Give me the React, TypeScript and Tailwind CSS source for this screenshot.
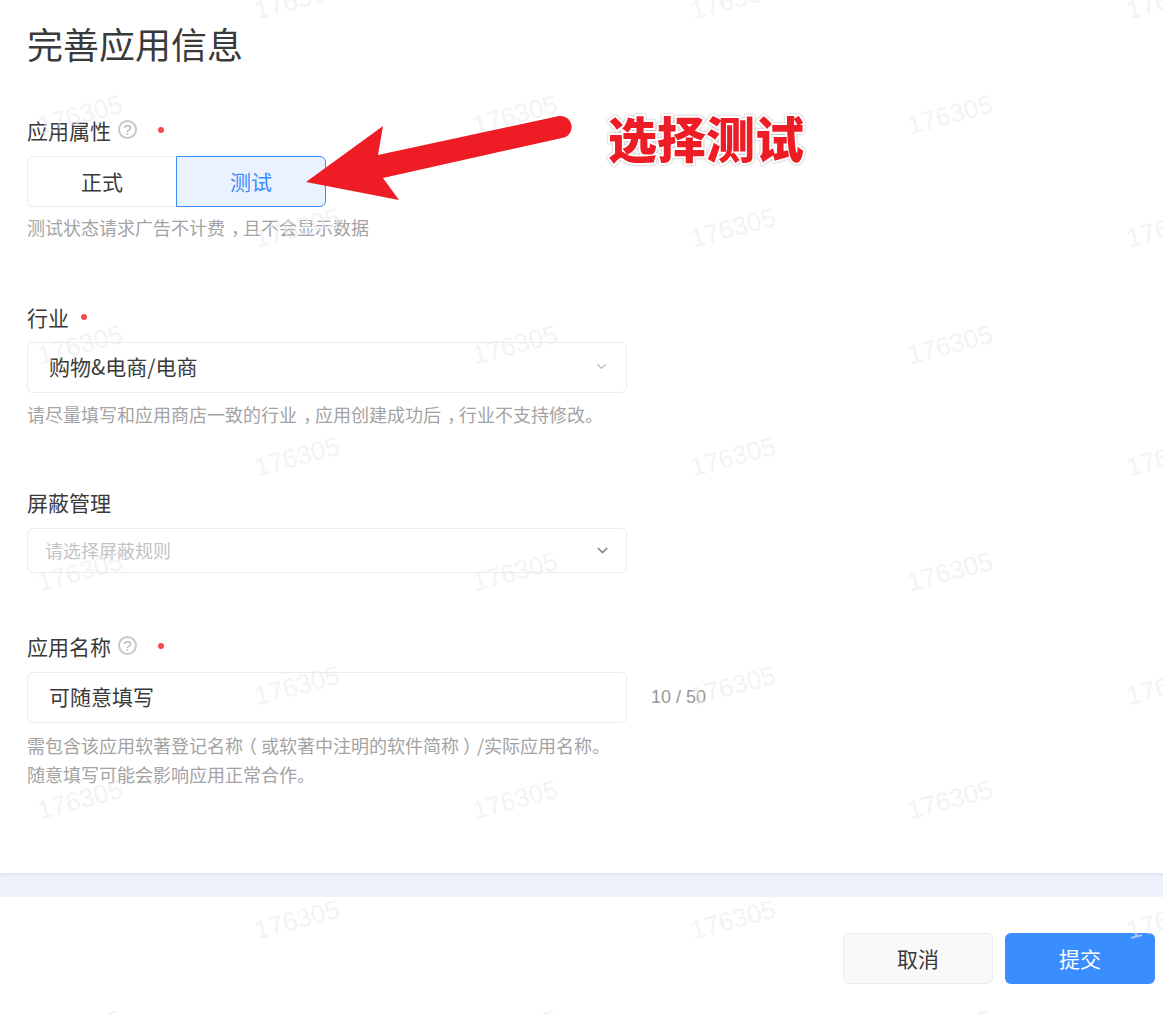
import { ChevronDown } from "lucide-react";

const WATERMARK_ROWS = [0, 115, 228, 345, 457, 572, 686, 800, 920, 1030];

function Watermarks() {
  return (
    <div className="pointer-events-none absolute inset-0 overflow-hidden">
      {WATERMARK_ROWS.map((y, row) =>
        (row % 2 === 0 ? [297, 733, 1169] : [80, 515, 950]).map((x) => (
          <span
            key={`${row}-${x}`}
            className="absolute -translate-x-1/2 -translate-y-1/2 -rotate-[15deg] font-['Liberation_Sans',sans-serif] text-[26px] text-[#e9ecef]/60"
            style={{ left: x, top: y }}
          >
            176305
          </span>
        ))
      )}
    </div>
  );
}

function Help() {
  return (
    <span className="ml-[7px] flex h-[19px] w-[19px] items-center justify-center rounded-full border-2 border-[#c9c9c9] font-['Liberation_Sans',sans-serif] text-[15px] leading-none text-[#b5b5b5]">
      ?
    </span>
  );
}

function Required({ className }: { className: string }) {
  return <span className={`h-[6px] w-[6px] rounded-full bg-[#f7494e] ${className}`} />;
}

function Label(props: { text: string; help?: boolean; required?: boolean }) {
  return (
    <div className="flex h-[30px] items-center pb-[3px] text-[21px] leading-[26px] text-[#3a3a3a]">
      {props.text}
      {props.help && <Help />}
      {props.required && <Required className={props.help ? "ml-[21px]" : "ml-[12px]"} />}
    </div>
  );
}

function Hint({ children }: { children: React.ReactNode }) {
  return <p className="text-[18px] leading-[29px] text-[#a3a3a3]">{children}</p>;
}

export default function App() {
  return (
    <div className="relative h-[1015px] w-full overflow-hidden bg-white font-['Noto_Sans_CJK_SC',sans-serif]">
      <main className="h-[873px] px-[27px] pt-[18px]">
        <h1 className="h-[50px] text-[36px] leading-[50px] font-normal text-[#3a3a3a]">完善应用信息</h1>

        <section className="mt-[48px]">
          <Label text="应用属性" help required />
          <div className="mt-[10px] flex h-[51px] w-[299px] text-[21px]">
            <button className="flex-1 rounded-l-[6px] border border-r-0 border-[#ececec] text-[#3a3a3a]">正式</button>
            <button className="flex-1 rounded-r-[6px] border border-[#3a8dff] bg-[#e9f2fe] text-[#3a8dff]">测试</button>
          </div>
          <div className="mt-[6px]">
            <Hint>
              测试状态请求广告不计费<span className="inline-block translate-x-[6px]">，</span>且不会显示数据
            </Hint>
          </div>
        </section>

        <section className="mt-[61px]">
          <Label text="行业" required />
          <div className="mt-[9px] flex h-[51px] w-[600px] items-center justify-between rounded-[6px] border border-[#ececec] pr-[17px] pb-[2px] pl-[21px] text-[21px] text-[#3a3a3a]">
            购物&amp;电商/电商
            <ChevronDown className="h-[15px] w-[15px] text-[#b5b5b5]" />
          </div>
          <div className="mt-[7px]">
            <Hint>
              请尽量填写和应用商店一致的行业<span className="inline-block translate-x-[6px]">，</span>应用创建成功后
              <span className="inline-block translate-x-[6px]">，</span>行业不支持修改。
            </Hint>
          </div>
        </section>

        <section className="mt-[59px]">
          <Label text="屏蔽管理" />
          <div className="mt-[10px] flex h-[45px] w-[600px] items-center justify-between rounded-[6px] border border-[#ececec] pr-[15px] pl-[17px] text-[18px] text-[#c4c4c4]">
            请选择屏蔽规则
            <ChevronDown className="h-[17px] w-[17px] text-[#888]" />
          </div>
        </section>

        <section className="mt-[59px]">
          <Label text="应用名称" help required />
          <div className="mt-[10px] flex items-center">
            <div className="flex h-[51px] w-[600px] items-center rounded-[6px] border border-[#ececec] pb-[1px] pl-[21px] text-[21px] text-[#3a3a3a]">
              可随意填写
            </div>
            <span className="ml-[24px] font-['Liberation_Sans',sans-serif] text-[18px] text-[#999]">10 / 50</span>
          </div>
          <div className="mt-[8px]">
            <Hint>
              需包含该应用软著登记名称<span className="inline-block -translate-x-[4px]">（</span>或软著中注明的软件简称
              <span className="inline-block translate-x-[4px]">）</span>/实际应用名称。
            </Hint>
            <Hint>随意填写可能会影响应用正常合作。</Hint>
          </div>
        </section>
      </main>

      <div className="h-[24px] bg-[#eff2fb] shadow-[inset_0_3px_3px_-1px_rgba(40,60,120,0.08)]" />

      <footer className="flex justify-end gap-[12px] pt-[36px] pr-[8px] text-[21px]">
        <button className="h-[51px] w-[150px] rounded-[6px] border border-[#ececec] bg-[#f9f9f9] text-[#3a3a3a]">取消</button>
        <button className="h-[51px] w-[150px] rounded-[6px] bg-[#3a8dff] text-white">提交</button>
      </footer>

      <Watermarks />

      {/* annotation drawn on top of the form */}
      <svg className="absolute top-[110px] left-[300px]" width="280" height="100" viewBox="300 110 280 100">
        <path
          d="M306 182 L383 126 L378 155 L559 116 A11 11 0 0 1 562 138 L383 178 L399 200 Z"
          fill="#ee1c25"
        />
      </svg>
      <span className="absolute top-[102px] left-[608px] text-[49px] leading-[70px] font-black whitespace-nowrap text-[#ee1c25] [paint-order:stroke_fill] [-webkit-text-stroke:4px_#fff] [filter:drop-shadow(0_0_1px_#aaa)]">
        选择测试
      </span>
    </div>
  );
}
